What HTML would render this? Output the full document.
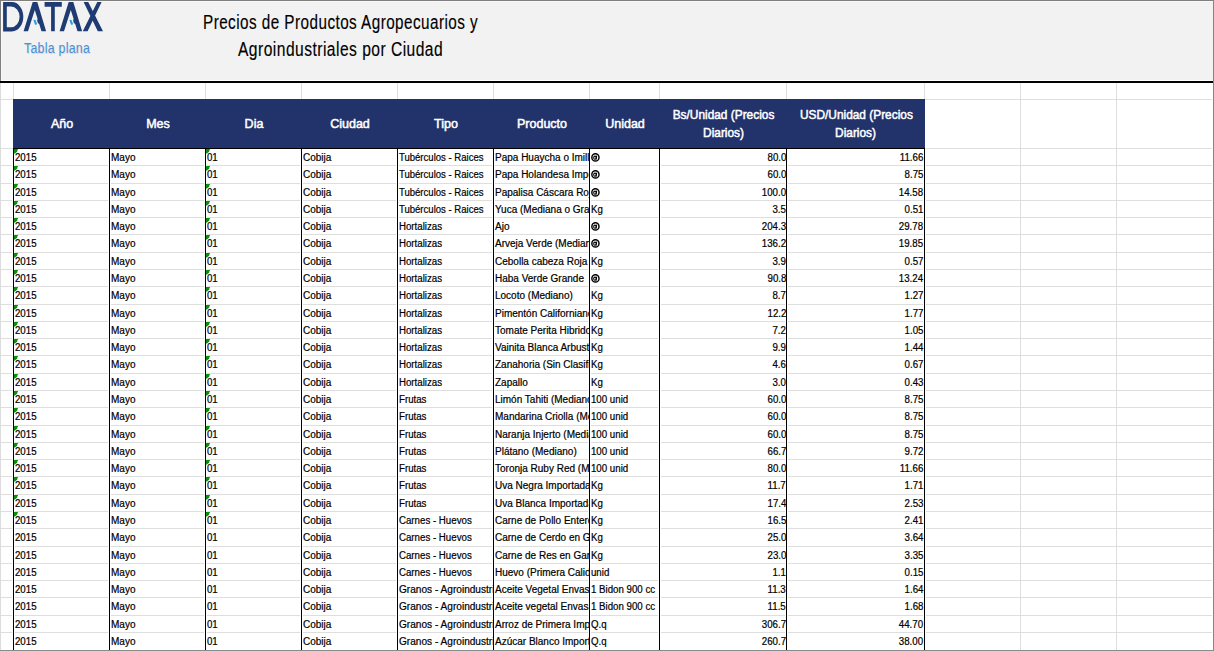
<!DOCTYPE html><html><head><meta charset="utf-8"><style>
*{margin:0;padding:0;box-sizing:border-box}
html,body{width:1214px;height:651px;overflow:hidden;background:#fff}
body{position:relative;font-family:"Liberation Sans",sans-serif;color:#000}
.a{position:absolute}
.gv{position:absolute;width:1px;background:#dedede}
.gh{position:absolute;height:1px;background:#dedede}
.bv{position:absolute;width:1px;background:#000}
.c{position:absolute;overflow:hidden;white-space:nowrap;font-size:10px;line-height:17px;height:17px;-webkit-text-stroke:0.2px #000}
.c span{display:inline-block;transform-origin:0 0;transform:scaleX(0.97)}
.r{position:absolute;white-space:nowrap;font-size:10px;line-height:17px;height:17px;text-align:right;-webkit-text-stroke:0.2px #000}
.r span{display:inline-block;transform-origin:100% 0;transform:scaleX(0.97)}
.tri{position:absolute;width:5px;height:5px}
.h{position:absolute;color:#fff;font-size:12.5px;-webkit-text-stroke:0.5px #fff;text-align:center;line-height:18px;white-space:nowrap}
.h span{display:inline-block;transform:scaleX(0.95)}

</style></head><body>
<div class="a" style="left:0;top:0;width:1214px;height:81px;background:#f2f2f2"></div>
<div class="a" style="left:0;top:80px;width:1214px;height:1px;background:#fff"></div>
<div class="a" style="left:0;top:81px;width:1214px;height:2px;background:#000"></div>
<div class="gv" style="left:13px;top:83px;height:567px"></div>
<div class="gv" style="left:109px;top:83px;height:567px"></div>
<div class="gv" style="left:205px;top:83px;height:567px"></div>
<div class="gv" style="left:301px;top:83px;height:567px"></div>
<div class="gv" style="left:397px;top:83px;height:567px"></div>
<div class="gv" style="left:493px;top:83px;height:567px"></div>
<div class="gv" style="left:589px;top:83px;height:567px"></div>
<div class="gv" style="left:659px;top:83px;height:567px"></div>
<div class="gv" style="left:786px;top:83px;height:567px"></div>
<div class="gv" style="left:924px;top:83px;height:567px"></div>
<div class="gv" style="left:1020px;top:83px;height:567px"></div>
<div class="gv" style="left:1116px;top:83px;height:567px"></div>
<div class="gh" style="left:1px;top:99px;width:1211px"></div>
<div class="gh" style="left:1px;top:148px;width:1211px"></div>
<div class="gh" style="left:1px;top:165px;width:1211px"></div>
<div class="gh" style="left:1px;top:183px;width:1211px"></div>
<div class="gh" style="left:1px;top:200px;width:1211px"></div>
<div class="gh" style="left:1px;top:217px;width:1211px"></div>
<div class="gh" style="left:1px;top:234px;width:1211px"></div>
<div class="gh" style="left:1px;top:252px;width:1211px"></div>
<div class="gh" style="left:1px;top:269px;width:1211px"></div>
<div class="gh" style="left:1px;top:286px;width:1211px"></div>
<div class="gh" style="left:1px;top:304px;width:1211px"></div>
<div class="gh" style="left:1px;top:321px;width:1211px"></div>
<div class="gh" style="left:1px;top:338px;width:1211px"></div>
<div class="gh" style="left:1px;top:355px;width:1211px"></div>
<div class="gh" style="left:1px;top:373px;width:1211px"></div>
<div class="gh" style="left:1px;top:390px;width:1211px"></div>
<div class="gh" style="left:1px;top:407px;width:1211px"></div>
<div class="gh" style="left:1px;top:425px;width:1211px"></div>
<div class="gh" style="left:1px;top:442px;width:1211px"></div>
<div class="gh" style="left:1px;top:459px;width:1211px"></div>
<div class="gh" style="left:1px;top:476px;width:1211px"></div>
<div class="gh" style="left:1px;top:494px;width:1211px"></div>
<div class="gh" style="left:1px;top:511px;width:1211px"></div>
<div class="gh" style="left:1px;top:528px;width:1211px"></div>
<div class="gh" style="left:1px;top:546px;width:1211px"></div>
<div class="gh" style="left:1px;top:563px;width:1211px"></div>
<div class="gh" style="left:1px;top:580px;width:1211px"></div>
<div class="gh" style="left:1px;top:597px;width:1211px"></div>
<div class="gh" style="left:1px;top:615px;width:1211px"></div>
<div class="gh" style="left:1px;top:632px;width:1211px"></div>
<div class="a" style="left:13px;top:99px;width:912px;height:49px;background:#22326a"></div>
<div class="a" style="left:13px;top:148px;width:912px;height:1px;background:#000"></div>
<div class="a" style="left:12px;top:149px;width:3px;height:501px;background:#fff"></div>
<div class="a" style="left:108px;top:149px;width:3px;height:501px;background:#fff"></div>
<div class="a" style="left:204px;top:149px;width:3px;height:501px;background:#fff"></div>
<div class="a" style="left:300px;top:149px;width:3px;height:501px;background:#fff"></div>
<div class="a" style="left:396px;top:149px;width:3px;height:501px;background:#fff"></div>
<div class="a" style="left:492px;top:149px;width:3px;height:501px;background:#fff"></div>
<div class="a" style="left:588px;top:149px;width:3px;height:501px;background:#fff"></div>
<div class="a" style="left:658px;top:149px;width:3px;height:501px;background:#fff"></div>
<div class="a" style="left:785px;top:149px;width:3px;height:501px;background:#fff"></div>
<div class="a" style="left:923px;top:149px;width:3px;height:501px;background:#fff"></div>
<div class="bv" style="left:13px;top:149px;height:501px"></div>
<div class="bv" style="left:109px;top:149px;height:501px"></div>
<div class="bv" style="left:205px;top:149px;height:501px"></div>
<div class="bv" style="left:301px;top:149px;height:501px"></div>
<div class="bv" style="left:397px;top:149px;height:501px"></div>
<div class="bv" style="left:493px;top:149px;height:501px"></div>
<div class="bv" style="left:589px;top:149px;height:501px"></div>
<div class="bv" style="left:659px;top:149px;height:501px"></div>
<div class="bv" style="left:786px;top:149px;height:501px"></div>
<div class="bv" style="left:924px;top:149px;height:501px"></div>
<div class="h" style="left:14px;top:115px;width:96px">Año</div>
<div class="h" style="left:110px;top:115px;width:96px">Mes</div>
<div class="h" style="left:206px;top:115px;width:96px">Dia</div>
<div class="h" style="left:302px;top:115px;width:96px">Ciudad</div>
<div class="h" style="left:398px;top:115px;width:96px">Tipo</div>
<div class="h" style="left:494px;top:115px;width:96px">Producto</div>
<div class="h" style="left:590px;top:115px;width:70px">Unidad</div>
<div class="h" style="left:660px;top:106px;width:127px"><span>Bs/Unidad (Precios</span></div>
<div class="h" style="left:660px;top:124px;width:127px"><span>Diarios)</span></div>
<div class="h" style="left:787px;top:106px;width:138px"><span>USD/Unidad (Precios</span></div>
<div class="h" style="left:787px;top:124px;width:138px"><span>Diarios)</span></div>
<div class="c" style="left:14px;top:149px;width:95px"><span style="padding-left:1px;transform:scaleX(0.97)">2015</span></div>
<div class="c" style="left:110px;top:149px;width:95px"><span style="padding-left:1px;transform:scaleX(1.0)">Mayo</span></div>
<div class="c" style="left:206px;top:149px;width:95px"><span style="padding-left:1px;transform:scaleX(0.97)">01</span></div>
<div class="c" style="left:302px;top:149px;width:95px"><span style="padding-left:1px;transform:scaleX(1.0)">Cobija</span></div>
<div class="c" style="left:398px;top:149px;width:95px"><span style="padding-left:1px;transform:scaleX(0.955)">Tubérculos - Raices</span></div>
<div class="c" style="left:494px;top:149px;width:95px"><span style="padding-left:1px;transform:scaleX(1.0)">Papa Huaycha o Imilla (Mediana)</span></div>
<div class="c" style="left:590px;top:149px;width:69px"><span style="padding-left:1px;transform:scaleX(0.97)"><svg width="10" height="9" viewBox="0 0 10 9" style="position:relative;top:1px;vertical-align:baseline"><circle cx="4.6" cy="4.4" r="3.7" fill="none" stroke="#000" stroke-width="1.5"/><ellipse cx="4.1" cy="4.7" rx="1.3" ry="1.6" fill="none" stroke="#000" stroke-width="1.1"/><path d="M5.9 2.6L5.2 6.6" stroke="#000" stroke-width="1.1"/></svg></span></div>
<div class="r" style="left:660px;top:149px;width:126px"><span>80.0</span></div>
<div class="r" style="left:787px;top:149px;width:136px"><span>11.66</span></div>
<svg class="tri" style="left:14px;top:149px" viewBox="0 0 5 5"><path d="M0 0H4.2L3.3 1.4V2.4L1.3 4.2L0 4.7Z" fill="#089008"/></svg>
<svg class="tri" style="left:206px;top:149px" viewBox="0 0 5 5"><path d="M0 0H4.2L3.3 1.4V2.4L1.3 4.2L0 4.7Z" fill="#089008"/></svg>
<div class="c" style="left:14px;top:166px;width:95px"><span style="padding-left:1px;transform:scaleX(0.97)">2015</span></div>
<div class="c" style="left:110px;top:166px;width:95px"><span style="padding-left:1px;transform:scaleX(1.0)">Mayo</span></div>
<div class="c" style="left:206px;top:166px;width:95px"><span style="padding-left:1px;transform:scaleX(0.97)">01</span></div>
<div class="c" style="left:302px;top:166px;width:95px"><span style="padding-left:1px;transform:scaleX(1.0)">Cobija</span></div>
<div class="c" style="left:398px;top:166px;width:95px"><span style="padding-left:1px;transform:scaleX(0.955)">Tubérculos - Raices</span></div>
<div class="c" style="left:494px;top:166px;width:95px"><span style="padding-left:1px;transform:scaleX(1.0)">Papa Holandesa Importada</span></div>
<div class="c" style="left:590px;top:166px;width:69px"><span style="padding-left:1px;transform:scaleX(0.97)"><svg width="10" height="9" viewBox="0 0 10 9" style="position:relative;top:1px;vertical-align:baseline"><circle cx="4.6" cy="4.4" r="3.7" fill="none" stroke="#000" stroke-width="1.5"/><ellipse cx="4.1" cy="4.7" rx="1.3" ry="1.6" fill="none" stroke="#000" stroke-width="1.1"/><path d="M5.9 2.6L5.2 6.6" stroke="#000" stroke-width="1.1"/></svg></span></div>
<div class="r" style="left:660px;top:166px;width:126px"><span>60.0</span></div>
<div class="r" style="left:787px;top:166px;width:136px"><span>8.75</span></div>
<svg class="tri" style="left:14px;top:166px" viewBox="0 0 5 5"><path d="M0 0H4.2L3.3 1.4V2.4L1.3 4.2L0 4.7Z" fill="#089008"/></svg>
<svg class="tri" style="left:206px;top:166px" viewBox="0 0 5 5"><path d="M0 0H4.2L3.3 1.4V2.4L1.3 4.2L0 4.7Z" fill="#089008"/></svg>
<div class="c" style="left:14px;top:184px;width:95px"><span style="padding-left:1px;transform:scaleX(0.97)">2015</span></div>
<div class="c" style="left:110px;top:184px;width:95px"><span style="padding-left:1px;transform:scaleX(1.0)">Mayo</span></div>
<div class="c" style="left:206px;top:184px;width:95px"><span style="padding-left:1px;transform:scaleX(0.97)">01</span></div>
<div class="c" style="left:302px;top:184px;width:95px"><span style="padding-left:1px;transform:scaleX(1.0)">Cobija</span></div>
<div class="c" style="left:398px;top:184px;width:95px"><span style="padding-left:1px;transform:scaleX(0.955)">Tubérculos - Raices</span></div>
<div class="c" style="left:494px;top:184px;width:95px"><span style="padding-left:1px;transform:scaleX(1.0)">Papalisa Cáscara Roja (Mediana)</span></div>
<div class="c" style="left:590px;top:184px;width:69px"><span style="padding-left:1px;transform:scaleX(0.97)"><svg width="10" height="9" viewBox="0 0 10 9" style="position:relative;top:1px;vertical-align:baseline"><circle cx="4.6" cy="4.4" r="3.7" fill="none" stroke="#000" stroke-width="1.5"/><ellipse cx="4.1" cy="4.7" rx="1.3" ry="1.6" fill="none" stroke="#000" stroke-width="1.1"/><path d="M5.9 2.6L5.2 6.6" stroke="#000" stroke-width="1.1"/></svg></span></div>
<div class="r" style="left:660px;top:184px;width:126px"><span>100.0</span></div>
<div class="r" style="left:787px;top:184px;width:136px"><span>14.58</span></div>
<svg class="tri" style="left:14px;top:184px" viewBox="0 0 5 5"><path d="M0 0H4.2L3.3 1.4V2.4L1.3 4.2L0 4.7Z" fill="#089008"/></svg>
<svg class="tri" style="left:206px;top:184px" viewBox="0 0 5 5"><path d="M0 0H4.2L3.3 1.4V2.4L1.3 4.2L0 4.7Z" fill="#089008"/></svg>
<div class="c" style="left:14px;top:201px;width:95px"><span style="padding-left:1px;transform:scaleX(0.97)">2015</span></div>
<div class="c" style="left:110px;top:201px;width:95px"><span style="padding-left:1px;transform:scaleX(1.0)">Mayo</span></div>
<div class="c" style="left:206px;top:201px;width:95px"><span style="padding-left:1px;transform:scaleX(0.97)">01</span></div>
<div class="c" style="left:302px;top:201px;width:95px"><span style="padding-left:1px;transform:scaleX(1.0)">Cobija</span></div>
<div class="c" style="left:398px;top:201px;width:95px"><span style="padding-left:1px;transform:scaleX(0.955)">Tubérculos - Raices</span></div>
<div class="c" style="left:494px;top:201px;width:95px"><span style="padding-left:1px;transform:scaleX(1.0)">Yuca (Mediana o Grande)</span></div>
<div class="c" style="left:590px;top:201px;width:69px"><span style="padding-left:1px;transform:scaleX(0.97)">Kg</span></div>
<div class="r" style="left:660px;top:201px;width:126px"><span>3.5</span></div>
<div class="r" style="left:787px;top:201px;width:136px"><span>0.51</span></div>
<svg class="tri" style="left:14px;top:201px" viewBox="0 0 5 5"><path d="M0 0H4.2L3.3 1.4V2.4L1.3 4.2L0 4.7Z" fill="#089008"/></svg>
<svg class="tri" style="left:206px;top:201px" viewBox="0 0 5 5"><path d="M0 0H4.2L3.3 1.4V2.4L1.3 4.2L0 4.7Z" fill="#089008"/></svg>
<div class="c" style="left:14px;top:218px;width:95px"><span style="padding-left:1px;transform:scaleX(0.97)">2015</span></div>
<div class="c" style="left:110px;top:218px;width:95px"><span style="padding-left:1px;transform:scaleX(1.0)">Mayo</span></div>
<div class="c" style="left:206px;top:218px;width:95px"><span style="padding-left:1px;transform:scaleX(0.97)">01</span></div>
<div class="c" style="left:302px;top:218px;width:95px"><span style="padding-left:1px;transform:scaleX(1.0)">Cobija</span></div>
<div class="c" style="left:398px;top:218px;width:95px"><span style="padding-left:1px;transform:scaleX(0.97)">Hortalizas</span></div>
<div class="c" style="left:494px;top:218px;width:95px"><span style="padding-left:1px;transform:scaleX(1.0)">Ajo</span></div>
<div class="c" style="left:590px;top:218px;width:69px"><span style="padding-left:1px;transform:scaleX(0.97)"><svg width="10" height="9" viewBox="0 0 10 9" style="position:relative;top:1px;vertical-align:baseline"><circle cx="4.6" cy="4.4" r="3.7" fill="none" stroke="#000" stroke-width="1.5"/><ellipse cx="4.1" cy="4.7" rx="1.3" ry="1.6" fill="none" stroke="#000" stroke-width="1.1"/><path d="M5.9 2.6L5.2 6.6" stroke="#000" stroke-width="1.1"/></svg></span></div>
<div class="r" style="left:660px;top:218px;width:126px"><span>204.3</span></div>
<div class="r" style="left:787px;top:218px;width:136px"><span>29.78</span></div>
<svg class="tri" style="left:14px;top:218px" viewBox="0 0 5 5"><path d="M0 0H4.2L3.3 1.4V2.4L1.3 4.2L0 4.7Z" fill="#089008"/></svg>
<svg class="tri" style="left:206px;top:218px" viewBox="0 0 5 5"><path d="M0 0H4.2L3.3 1.4V2.4L1.3 4.2L0 4.7Z" fill="#089008"/></svg>
<div class="c" style="left:14px;top:235px;width:95px"><span style="padding-left:1px;transform:scaleX(0.97)">2015</span></div>
<div class="c" style="left:110px;top:235px;width:95px"><span style="padding-left:1px;transform:scaleX(1.0)">Mayo</span></div>
<div class="c" style="left:206px;top:235px;width:95px"><span style="padding-left:1px;transform:scaleX(0.97)">01</span></div>
<div class="c" style="left:302px;top:235px;width:95px"><span style="padding-left:1px;transform:scaleX(1.0)">Cobija</span></div>
<div class="c" style="left:398px;top:235px;width:95px"><span style="padding-left:1px;transform:scaleX(0.97)">Hortalizas</span></div>
<div class="c" style="left:494px;top:235px;width:95px"><span style="padding-left:1px;transform:scaleX(1.0)">Arveja Verde (Mediana)</span></div>
<div class="c" style="left:590px;top:235px;width:69px"><span style="padding-left:1px;transform:scaleX(0.97)"><svg width="10" height="9" viewBox="0 0 10 9" style="position:relative;top:1px;vertical-align:baseline"><circle cx="4.6" cy="4.4" r="3.7" fill="none" stroke="#000" stroke-width="1.5"/><ellipse cx="4.1" cy="4.7" rx="1.3" ry="1.6" fill="none" stroke="#000" stroke-width="1.1"/><path d="M5.9 2.6L5.2 6.6" stroke="#000" stroke-width="1.1"/></svg></span></div>
<div class="r" style="left:660px;top:235px;width:126px"><span>136.2</span></div>
<div class="r" style="left:787px;top:235px;width:136px"><span>19.85</span></div>
<svg class="tri" style="left:14px;top:235px" viewBox="0 0 5 5"><path d="M0 0H4.2L3.3 1.4V2.4L1.3 4.2L0 4.7Z" fill="#089008"/></svg>
<svg class="tri" style="left:206px;top:235px" viewBox="0 0 5 5"><path d="M0 0H4.2L3.3 1.4V2.4L1.3 4.2L0 4.7Z" fill="#089008"/></svg>
<div class="c" style="left:14px;top:253px;width:95px"><span style="padding-left:1px;transform:scaleX(0.97)">2015</span></div>
<div class="c" style="left:110px;top:253px;width:95px"><span style="padding-left:1px;transform:scaleX(1.0)">Mayo</span></div>
<div class="c" style="left:206px;top:253px;width:95px"><span style="padding-left:1px;transform:scaleX(0.97)">01</span></div>
<div class="c" style="left:302px;top:253px;width:95px"><span style="padding-left:1px;transform:scaleX(1.0)">Cobija</span></div>
<div class="c" style="left:398px;top:253px;width:95px"><span style="padding-left:1px;transform:scaleX(0.97)">Hortalizas</span></div>
<div class="c" style="left:494px;top:253px;width:95px"><span style="padding-left:1px;transform:scaleX(1.0)">Cebolla cabeza Roja Importada</span></div>
<div class="c" style="left:590px;top:253px;width:69px"><span style="padding-left:1px;transform:scaleX(0.97)">Kg</span></div>
<div class="r" style="left:660px;top:253px;width:126px"><span>3.9</span></div>
<div class="r" style="left:787px;top:253px;width:136px"><span>0.57</span></div>
<svg class="tri" style="left:14px;top:253px" viewBox="0 0 5 5"><path d="M0 0H4.2L3.3 1.4V2.4L1.3 4.2L0 4.7Z" fill="#089008"/></svg>
<svg class="tri" style="left:206px;top:253px" viewBox="0 0 5 5"><path d="M0 0H4.2L3.3 1.4V2.4L1.3 4.2L0 4.7Z" fill="#089008"/></svg>
<div class="c" style="left:14px;top:270px;width:95px"><span style="padding-left:1px;transform:scaleX(0.97)">2015</span></div>
<div class="c" style="left:110px;top:270px;width:95px"><span style="padding-left:1px;transform:scaleX(1.0)">Mayo</span></div>
<div class="c" style="left:206px;top:270px;width:95px"><span style="padding-left:1px;transform:scaleX(0.97)">01</span></div>
<div class="c" style="left:302px;top:270px;width:95px"><span style="padding-left:1px;transform:scaleX(1.0)">Cobija</span></div>
<div class="c" style="left:398px;top:270px;width:95px"><span style="padding-left:1px;transform:scaleX(0.97)">Hortalizas</span></div>
<div class="c" style="left:494px;top:270px;width:95px"><span style="padding-left:1px;transform:scaleX(1.0)">Haba Verde Grande</span></div>
<div class="c" style="left:590px;top:270px;width:69px"><span style="padding-left:1px;transform:scaleX(0.97)"><svg width="10" height="9" viewBox="0 0 10 9" style="position:relative;top:1px;vertical-align:baseline"><circle cx="4.6" cy="4.4" r="3.7" fill="none" stroke="#000" stroke-width="1.5"/><ellipse cx="4.1" cy="4.7" rx="1.3" ry="1.6" fill="none" stroke="#000" stroke-width="1.1"/><path d="M5.9 2.6L5.2 6.6" stroke="#000" stroke-width="1.1"/></svg></span></div>
<div class="r" style="left:660px;top:270px;width:126px"><span>90.8</span></div>
<div class="r" style="left:787px;top:270px;width:136px"><span>13.24</span></div>
<svg class="tri" style="left:14px;top:270px" viewBox="0 0 5 5"><path d="M0 0H4.2L3.3 1.4V2.4L1.3 4.2L0 4.7Z" fill="#089008"/></svg>
<svg class="tri" style="left:206px;top:270px" viewBox="0 0 5 5"><path d="M0 0H4.2L3.3 1.4V2.4L1.3 4.2L0 4.7Z" fill="#089008"/></svg>
<div class="c" style="left:14px;top:287px;width:95px"><span style="padding-left:1px;transform:scaleX(0.97)">2015</span></div>
<div class="c" style="left:110px;top:287px;width:95px"><span style="padding-left:1px;transform:scaleX(1.0)">Mayo</span></div>
<div class="c" style="left:206px;top:287px;width:95px"><span style="padding-left:1px;transform:scaleX(0.97)">01</span></div>
<div class="c" style="left:302px;top:287px;width:95px"><span style="padding-left:1px;transform:scaleX(1.0)">Cobija</span></div>
<div class="c" style="left:398px;top:287px;width:95px"><span style="padding-left:1px;transform:scaleX(0.97)">Hortalizas</span></div>
<div class="c" style="left:494px;top:287px;width:95px"><span style="padding-left:1px;transform:scaleX(1.0)">Locoto (Mediano)</span></div>
<div class="c" style="left:590px;top:287px;width:69px"><span style="padding-left:1px;transform:scaleX(0.97)">Kg</span></div>
<div class="r" style="left:660px;top:287px;width:126px"><span>8.7</span></div>
<div class="r" style="left:787px;top:287px;width:136px"><span>1.27</span></div>
<svg class="tri" style="left:14px;top:287px" viewBox="0 0 5 5"><path d="M0 0H4.2L3.3 1.4V2.4L1.3 4.2L0 4.7Z" fill="#089008"/></svg>
<svg class="tri" style="left:206px;top:287px" viewBox="0 0 5 5"><path d="M0 0H4.2L3.3 1.4V2.4L1.3 4.2L0 4.7Z" fill="#089008"/></svg>
<div class="c" style="left:14px;top:305px;width:95px"><span style="padding-left:1px;transform:scaleX(0.97)">2015</span></div>
<div class="c" style="left:110px;top:305px;width:95px"><span style="padding-left:1px;transform:scaleX(1.0)">Mayo</span></div>
<div class="c" style="left:206px;top:305px;width:95px"><span style="padding-left:1px;transform:scaleX(0.97)">01</span></div>
<div class="c" style="left:302px;top:305px;width:95px"><span style="padding-left:1px;transform:scaleX(1.0)">Cobija</span></div>
<div class="c" style="left:398px;top:305px;width:95px"><span style="padding-left:1px;transform:scaleX(0.97)">Hortalizas</span></div>
<div class="c" style="left:494px;top:305px;width:95px"><span style="padding-left:1px;transform:scaleX(1.0)">Pimentón Californiano</span></div>
<div class="c" style="left:590px;top:305px;width:69px"><span style="padding-left:1px;transform:scaleX(0.97)">Kg</span></div>
<div class="r" style="left:660px;top:305px;width:126px"><span>12.2</span></div>
<div class="r" style="left:787px;top:305px;width:136px"><span>1.77</span></div>
<svg class="tri" style="left:14px;top:305px" viewBox="0 0 5 5"><path d="M0 0H4.2L3.3 1.4V2.4L1.3 4.2L0 4.7Z" fill="#089008"/></svg>
<svg class="tri" style="left:206px;top:305px" viewBox="0 0 5 5"><path d="M0 0H4.2L3.3 1.4V2.4L1.3 4.2L0 4.7Z" fill="#089008"/></svg>
<div class="c" style="left:14px;top:322px;width:95px"><span style="padding-left:1px;transform:scaleX(0.97)">2015</span></div>
<div class="c" style="left:110px;top:322px;width:95px"><span style="padding-left:1px;transform:scaleX(1.0)">Mayo</span></div>
<div class="c" style="left:206px;top:322px;width:95px"><span style="padding-left:1px;transform:scaleX(0.97)">01</span></div>
<div class="c" style="left:302px;top:322px;width:95px"><span style="padding-left:1px;transform:scaleX(1.0)">Cobija</span></div>
<div class="c" style="left:398px;top:322px;width:95px"><span style="padding-left:1px;transform:scaleX(0.97)">Hortalizas</span></div>
<div class="c" style="left:494px;top:322px;width:95px"><span style="padding-left:1px;transform:scaleX(1.0)">Tomate Perita Hibrido</span></div>
<div class="c" style="left:590px;top:322px;width:69px"><span style="padding-left:1px;transform:scaleX(0.97)">Kg</span></div>
<div class="r" style="left:660px;top:322px;width:126px"><span>7.2</span></div>
<div class="r" style="left:787px;top:322px;width:136px"><span>1.05</span></div>
<svg class="tri" style="left:14px;top:322px" viewBox="0 0 5 5"><path d="M0 0H4.2L3.3 1.4V2.4L1.3 4.2L0 4.7Z" fill="#089008"/></svg>
<svg class="tri" style="left:206px;top:322px" viewBox="0 0 5 5"><path d="M0 0H4.2L3.3 1.4V2.4L1.3 4.2L0 4.7Z" fill="#089008"/></svg>
<div class="c" style="left:14px;top:339px;width:95px"><span style="padding-left:1px;transform:scaleX(0.97)">2015</span></div>
<div class="c" style="left:110px;top:339px;width:95px"><span style="padding-left:1px;transform:scaleX(1.0)">Mayo</span></div>
<div class="c" style="left:206px;top:339px;width:95px"><span style="padding-left:1px;transform:scaleX(0.97)">01</span></div>
<div class="c" style="left:302px;top:339px;width:95px"><span style="padding-left:1px;transform:scaleX(1.0)">Cobija</span></div>
<div class="c" style="left:398px;top:339px;width:95px"><span style="padding-left:1px;transform:scaleX(0.97)">Hortalizas</span></div>
<div class="c" style="left:494px;top:339px;width:95px"><span style="padding-left:1px;transform:scaleX(1.0)">Vainita Blanca Arbustiva</span></div>
<div class="c" style="left:590px;top:339px;width:69px"><span style="padding-left:1px;transform:scaleX(0.97)">Kg</span></div>
<div class="r" style="left:660px;top:339px;width:126px"><span>9.9</span></div>
<div class="r" style="left:787px;top:339px;width:136px"><span>1.44</span></div>
<svg class="tri" style="left:14px;top:339px" viewBox="0 0 5 5"><path d="M0 0H4.2L3.3 1.4V2.4L1.3 4.2L0 4.7Z" fill="#089008"/></svg>
<svg class="tri" style="left:206px;top:339px" viewBox="0 0 5 5"><path d="M0 0H4.2L3.3 1.4V2.4L1.3 4.2L0 4.7Z" fill="#089008"/></svg>
<div class="c" style="left:14px;top:356px;width:95px"><span style="padding-left:1px;transform:scaleX(0.97)">2015</span></div>
<div class="c" style="left:110px;top:356px;width:95px"><span style="padding-left:1px;transform:scaleX(1.0)">Mayo</span></div>
<div class="c" style="left:206px;top:356px;width:95px"><span style="padding-left:1px;transform:scaleX(0.97)">01</span></div>
<div class="c" style="left:302px;top:356px;width:95px"><span style="padding-left:1px;transform:scaleX(1.0)">Cobija</span></div>
<div class="c" style="left:398px;top:356px;width:95px"><span style="padding-left:1px;transform:scaleX(0.97)">Hortalizas</span></div>
<div class="c" style="left:494px;top:356px;width:95px"><span style="padding-left:1px;transform:scaleX(1.0)">Zanahoria (Sin Clasificar)</span></div>
<div class="c" style="left:590px;top:356px;width:69px"><span style="padding-left:1px;transform:scaleX(0.97)">Kg</span></div>
<div class="r" style="left:660px;top:356px;width:126px"><span>4.6</span></div>
<div class="r" style="left:787px;top:356px;width:136px"><span>0.67</span></div>
<svg class="tri" style="left:14px;top:356px" viewBox="0 0 5 5"><path d="M0 0H4.2L3.3 1.4V2.4L1.3 4.2L0 4.7Z" fill="#089008"/></svg>
<svg class="tri" style="left:206px;top:356px" viewBox="0 0 5 5"><path d="M0 0H4.2L3.3 1.4V2.4L1.3 4.2L0 4.7Z" fill="#089008"/></svg>
<div class="c" style="left:14px;top:374px;width:95px"><span style="padding-left:1px;transform:scaleX(0.97)">2015</span></div>
<div class="c" style="left:110px;top:374px;width:95px"><span style="padding-left:1px;transform:scaleX(1.0)">Mayo</span></div>
<div class="c" style="left:206px;top:374px;width:95px"><span style="padding-left:1px;transform:scaleX(0.97)">01</span></div>
<div class="c" style="left:302px;top:374px;width:95px"><span style="padding-left:1px;transform:scaleX(1.0)">Cobija</span></div>
<div class="c" style="left:398px;top:374px;width:95px"><span style="padding-left:1px;transform:scaleX(0.97)">Hortalizas</span></div>
<div class="c" style="left:494px;top:374px;width:95px"><span style="padding-left:1px;transform:scaleX(1.0)">Zapallo</span></div>
<div class="c" style="left:590px;top:374px;width:69px"><span style="padding-left:1px;transform:scaleX(0.97)">Kg</span></div>
<div class="r" style="left:660px;top:374px;width:126px"><span>3.0</span></div>
<div class="r" style="left:787px;top:374px;width:136px"><span>0.43</span></div>
<svg class="tri" style="left:14px;top:374px" viewBox="0 0 5 5"><path d="M0 0H4.2L3.3 1.4V2.4L1.3 4.2L0 4.7Z" fill="#089008"/></svg>
<svg class="tri" style="left:206px;top:374px" viewBox="0 0 5 5"><path d="M0 0H4.2L3.3 1.4V2.4L1.3 4.2L0 4.7Z" fill="#089008"/></svg>
<div class="c" style="left:14px;top:391px;width:95px"><span style="padding-left:1px;transform:scaleX(0.97)">2015</span></div>
<div class="c" style="left:110px;top:391px;width:95px"><span style="padding-left:1px;transform:scaleX(1.0)">Mayo</span></div>
<div class="c" style="left:206px;top:391px;width:95px"><span style="padding-left:1px;transform:scaleX(0.97)">01</span></div>
<div class="c" style="left:302px;top:391px;width:95px"><span style="padding-left:1px;transform:scaleX(1.0)">Cobija</span></div>
<div class="c" style="left:398px;top:391px;width:95px"><span style="padding-left:1px;transform:scaleX(0.97)">Frutas</span></div>
<div class="c" style="left:494px;top:391px;width:95px"><span style="padding-left:1px;transform:scaleX(1.0)">Limón Tahiti (Mediano)</span></div>
<div class="c" style="left:590px;top:391px;width:69px"><span style="padding-left:1px;transform:scaleX(0.97)">100 unid</span></div>
<div class="r" style="left:660px;top:391px;width:126px"><span>60.0</span></div>
<div class="r" style="left:787px;top:391px;width:136px"><span>8.75</span></div>
<svg class="tri" style="left:14px;top:391px" viewBox="0 0 5 5"><path d="M0 0H4.2L3.3 1.4V2.4L1.3 4.2L0 4.7Z" fill="#089008"/></svg>
<svg class="tri" style="left:206px;top:391px" viewBox="0 0 5 5"><path d="M0 0H4.2L3.3 1.4V2.4L1.3 4.2L0 4.7Z" fill="#089008"/></svg>
<div class="c" style="left:14px;top:408px;width:95px"><span style="padding-left:1px;transform:scaleX(0.97)">2015</span></div>
<div class="c" style="left:110px;top:408px;width:95px"><span style="padding-left:1px;transform:scaleX(1.0)">Mayo</span></div>
<div class="c" style="left:206px;top:408px;width:95px"><span style="padding-left:1px;transform:scaleX(0.97)">01</span></div>
<div class="c" style="left:302px;top:408px;width:95px"><span style="padding-left:1px;transform:scaleX(1.0)">Cobija</span></div>
<div class="c" style="left:398px;top:408px;width:95px"><span style="padding-left:1px;transform:scaleX(0.97)">Frutas</span></div>
<div class="c" style="left:494px;top:408px;width:95px"><span style="padding-left:1px;transform:scaleX(1.0)">Mandarina Criolla (Mediana)</span></div>
<div class="c" style="left:590px;top:408px;width:69px"><span style="padding-left:1px;transform:scaleX(0.97)">100 unid</span></div>
<div class="r" style="left:660px;top:408px;width:126px"><span>60.0</span></div>
<div class="r" style="left:787px;top:408px;width:136px"><span>8.75</span></div>
<svg class="tri" style="left:14px;top:408px" viewBox="0 0 5 5"><path d="M0 0H4.2L3.3 1.4V2.4L1.3 4.2L0 4.7Z" fill="#089008"/></svg>
<svg class="tri" style="left:206px;top:408px" viewBox="0 0 5 5"><path d="M0 0H4.2L3.3 1.4V2.4L1.3 4.2L0 4.7Z" fill="#089008"/></svg>
<div class="c" style="left:14px;top:426px;width:95px"><span style="padding-left:1px;transform:scaleX(0.97)">2015</span></div>
<div class="c" style="left:110px;top:426px;width:95px"><span style="padding-left:1px;transform:scaleX(1.0)">Mayo</span></div>
<div class="c" style="left:206px;top:426px;width:95px"><span style="padding-left:1px;transform:scaleX(0.97)">01</span></div>
<div class="c" style="left:302px;top:426px;width:95px"><span style="padding-left:1px;transform:scaleX(1.0)">Cobija</span></div>
<div class="c" style="left:398px;top:426px;width:95px"><span style="padding-left:1px;transform:scaleX(0.97)">Frutas</span></div>
<div class="c" style="left:494px;top:426px;width:95px"><span style="padding-left:1px;transform:scaleX(1.0)">Naranja Injerto (Mediana)</span></div>
<div class="c" style="left:590px;top:426px;width:69px"><span style="padding-left:1px;transform:scaleX(0.97)">100 unid</span></div>
<div class="r" style="left:660px;top:426px;width:126px"><span>60.0</span></div>
<div class="r" style="left:787px;top:426px;width:136px"><span>8.75</span></div>
<svg class="tri" style="left:14px;top:426px" viewBox="0 0 5 5"><path d="M0 0H4.2L3.3 1.4V2.4L1.3 4.2L0 4.7Z" fill="#089008"/></svg>
<svg class="tri" style="left:206px;top:426px" viewBox="0 0 5 5"><path d="M0 0H4.2L3.3 1.4V2.4L1.3 4.2L0 4.7Z" fill="#089008"/></svg>
<div class="c" style="left:14px;top:443px;width:95px"><span style="padding-left:1px;transform:scaleX(0.97)">2015</span></div>
<div class="c" style="left:110px;top:443px;width:95px"><span style="padding-left:1px;transform:scaleX(1.0)">Mayo</span></div>
<div class="c" style="left:206px;top:443px;width:95px"><span style="padding-left:1px;transform:scaleX(0.97)">01</span></div>
<div class="c" style="left:302px;top:443px;width:95px"><span style="padding-left:1px;transform:scaleX(1.0)">Cobija</span></div>
<div class="c" style="left:398px;top:443px;width:95px"><span style="padding-left:1px;transform:scaleX(0.97)">Frutas</span></div>
<div class="c" style="left:494px;top:443px;width:95px"><span style="padding-left:1px;transform:scaleX(1.0)">Plátano (Mediano)</span></div>
<div class="c" style="left:590px;top:443px;width:69px"><span style="padding-left:1px;transform:scaleX(0.97)">100 unid</span></div>
<div class="r" style="left:660px;top:443px;width:126px"><span>66.7</span></div>
<div class="r" style="left:787px;top:443px;width:136px"><span>9.72</span></div>
<svg class="tri" style="left:14px;top:443px" viewBox="0 0 5 5"><path d="M0 0H4.2L3.3 1.4V2.4L1.3 4.2L0 4.7Z" fill="#089008"/></svg>
<svg class="tri" style="left:206px;top:443px" viewBox="0 0 5 5"><path d="M0 0H4.2L3.3 1.4V2.4L1.3 4.2L0 4.7Z" fill="#089008"/></svg>
<div class="c" style="left:14px;top:460px;width:95px"><span style="padding-left:1px;transform:scaleX(0.97)">2015</span></div>
<div class="c" style="left:110px;top:460px;width:95px"><span style="padding-left:1px;transform:scaleX(1.0)">Mayo</span></div>
<div class="c" style="left:206px;top:460px;width:95px"><span style="padding-left:1px;transform:scaleX(0.97)">01</span></div>
<div class="c" style="left:302px;top:460px;width:95px"><span style="padding-left:1px;transform:scaleX(1.0)">Cobija</span></div>
<div class="c" style="left:398px;top:460px;width:95px"><span style="padding-left:1px;transform:scaleX(0.97)">Frutas</span></div>
<div class="c" style="left:494px;top:460px;width:95px"><span style="padding-left:1px;transform:scaleX(1.0)">Toronja Ruby Red (Mediana)</span></div>
<div class="c" style="left:590px;top:460px;width:69px"><span style="padding-left:1px;transform:scaleX(0.97)">100 unid</span></div>
<div class="r" style="left:660px;top:460px;width:126px"><span>80.0</span></div>
<div class="r" style="left:787px;top:460px;width:136px"><span>11.66</span></div>
<svg class="tri" style="left:14px;top:460px" viewBox="0 0 5 5"><path d="M0 0H4.2L3.3 1.4V2.4L1.3 4.2L0 4.7Z" fill="#089008"/></svg>
<svg class="tri" style="left:206px;top:460px" viewBox="0 0 5 5"><path d="M0 0H4.2L3.3 1.4V2.4L1.3 4.2L0 4.7Z" fill="#089008"/></svg>
<div class="c" style="left:14px;top:477px;width:95px"><span style="padding-left:1px;transform:scaleX(0.97)">2015</span></div>
<div class="c" style="left:110px;top:477px;width:95px"><span style="padding-left:1px;transform:scaleX(1.0)">Mayo</span></div>
<div class="c" style="left:206px;top:477px;width:95px"><span style="padding-left:1px;transform:scaleX(0.97)">01</span></div>
<div class="c" style="left:302px;top:477px;width:95px"><span style="padding-left:1px;transform:scaleX(1.0)">Cobija</span></div>
<div class="c" style="left:398px;top:477px;width:95px"><span style="padding-left:1px;transform:scaleX(0.97)">Frutas</span></div>
<div class="c" style="left:494px;top:477px;width:95px"><span style="padding-left:1px;transform:scaleX(1.0)">Uva Negra Importada</span></div>
<div class="c" style="left:590px;top:477px;width:69px"><span style="padding-left:1px;transform:scaleX(0.97)">Kg</span></div>
<div class="r" style="left:660px;top:477px;width:126px"><span>11.7</span></div>
<div class="r" style="left:787px;top:477px;width:136px"><span>1.71</span></div>
<svg class="tri" style="left:14px;top:477px" viewBox="0 0 5 5"><path d="M0 0H4.2L3.3 1.4V2.4L1.3 4.2L0 4.7Z" fill="#089008"/></svg>
<svg class="tri" style="left:206px;top:477px" viewBox="0 0 5 5"><path d="M0 0H4.2L3.3 1.4V2.4L1.3 4.2L0 4.7Z" fill="#089008"/></svg>
<div class="c" style="left:14px;top:495px;width:95px"><span style="padding-left:1px;transform:scaleX(0.97)">2015</span></div>
<div class="c" style="left:110px;top:495px;width:95px"><span style="padding-left:1px;transform:scaleX(1.0)">Mayo</span></div>
<div class="c" style="left:206px;top:495px;width:95px"><span style="padding-left:1px;transform:scaleX(0.97)">01</span></div>
<div class="c" style="left:302px;top:495px;width:95px"><span style="padding-left:1px;transform:scaleX(1.0)">Cobija</span></div>
<div class="c" style="left:398px;top:495px;width:95px"><span style="padding-left:1px;transform:scaleX(0.97)">Frutas</span></div>
<div class="c" style="left:494px;top:495px;width:95px"><span style="padding-left:1px;transform:scaleX(1.0)">Uva Blanca Importada</span></div>
<div class="c" style="left:590px;top:495px;width:69px"><span style="padding-left:1px;transform:scaleX(0.97)">Kg</span></div>
<div class="r" style="left:660px;top:495px;width:126px"><span>17.4</span></div>
<div class="r" style="left:787px;top:495px;width:136px"><span>2.53</span></div>
<svg class="tri" style="left:14px;top:495px" viewBox="0 0 5 5"><path d="M0 0H4.2L3.3 1.4V2.4L1.3 4.2L0 4.7Z" fill="#089008"/></svg>
<svg class="tri" style="left:206px;top:495px" viewBox="0 0 5 5"><path d="M0 0H4.2L3.3 1.4V2.4L1.3 4.2L0 4.7Z" fill="#089008"/></svg>
<div class="c" style="left:14px;top:512px;width:95px"><span style="padding-left:1px;transform:scaleX(0.97)">2015</span></div>
<div class="c" style="left:110px;top:512px;width:95px"><span style="padding-left:1px;transform:scaleX(1.0)">Mayo</span></div>
<div class="c" style="left:206px;top:512px;width:95px"><span style="padding-left:1px;transform:scaleX(0.97)">01</span></div>
<div class="c" style="left:302px;top:512px;width:95px"><span style="padding-left:1px;transform:scaleX(1.0)">Cobija</span></div>
<div class="c" style="left:398px;top:512px;width:95px"><span style="padding-left:1px;transform:scaleX(0.97)">Carnes - Huevos</span></div>
<div class="c" style="left:494px;top:512px;width:95px"><span style="padding-left:1px;transform:scaleX(1.0)">Carne de Pollo Entero</span></div>
<div class="c" style="left:590px;top:512px;width:69px"><span style="padding-left:1px;transform:scaleX(0.97)">Kg</span></div>
<div class="r" style="left:660px;top:512px;width:126px"><span>16.5</span></div>
<div class="r" style="left:787px;top:512px;width:136px"><span>2.41</span></div>
<svg class="tri" style="left:14px;top:512px" viewBox="0 0 5 5"><path d="M0 0H4.2L3.3 1.4V2.4L1.3 4.2L0 4.7Z" fill="#089008"/></svg>
<svg class="tri" style="left:206px;top:512px" viewBox="0 0 5 5"><path d="M0 0H4.2L3.3 1.4V2.4L1.3 4.2L0 4.7Z" fill="#089008"/></svg>
<div class="c" style="left:14px;top:529px;width:95px"><span style="padding-left:1px;transform:scaleX(0.97)">2015</span></div>
<div class="c" style="left:110px;top:529px;width:95px"><span style="padding-left:1px;transform:scaleX(1.0)">Mayo</span></div>
<div class="c" style="left:206px;top:529px;width:95px"><span style="padding-left:1px;transform:scaleX(0.97)">01</span></div>
<div class="c" style="left:302px;top:529px;width:95px"><span style="padding-left:1px;transform:scaleX(1.0)">Cobija</span></div>
<div class="c" style="left:398px;top:529px;width:95px"><span style="padding-left:1px;transform:scaleX(0.97)">Carnes - Huevos</span></div>
<div class="c" style="left:494px;top:529px;width:95px"><span style="padding-left:1px;transform:scaleX(1.0)">Carne de Cerdo en Gancho</span></div>
<div class="c" style="left:590px;top:529px;width:69px"><span style="padding-left:1px;transform:scaleX(0.97)">Kg</span></div>
<div class="r" style="left:660px;top:529px;width:126px"><span>25.0</span></div>
<div class="r" style="left:787px;top:529px;width:136px"><span>3.64</span></div>
<div class="c" style="left:14px;top:547px;width:95px"><span style="padding-left:1px;transform:scaleX(0.97)">2015</span></div>
<div class="c" style="left:110px;top:547px;width:95px"><span style="padding-left:1px;transform:scaleX(1.0)">Mayo</span></div>
<div class="c" style="left:206px;top:547px;width:95px"><span style="padding-left:1px;transform:scaleX(0.97)">01</span></div>
<div class="c" style="left:302px;top:547px;width:95px"><span style="padding-left:1px;transform:scaleX(1.0)">Cobija</span></div>
<div class="c" style="left:398px;top:547px;width:95px"><span style="padding-left:1px;transform:scaleX(0.97)">Carnes - Huevos</span></div>
<div class="c" style="left:494px;top:547px;width:95px"><span style="padding-left:1px;transform:scaleX(1.0)">Carne de Res en Gancho</span></div>
<div class="c" style="left:590px;top:547px;width:69px"><span style="padding-left:1px;transform:scaleX(0.97)">Kg</span></div>
<div class="r" style="left:660px;top:547px;width:126px"><span>23.0</span></div>
<div class="r" style="left:787px;top:547px;width:136px"><span>3.35</span></div>
<div class="c" style="left:14px;top:564px;width:95px"><span style="padding-left:1px;transform:scaleX(0.97)">2015</span></div>
<div class="c" style="left:110px;top:564px;width:95px"><span style="padding-left:1px;transform:scaleX(1.0)">Mayo</span></div>
<div class="c" style="left:206px;top:564px;width:95px"><span style="padding-left:1px;transform:scaleX(0.97)">01</span></div>
<div class="c" style="left:302px;top:564px;width:95px"><span style="padding-left:1px;transform:scaleX(1.0)">Cobija</span></div>
<div class="c" style="left:398px;top:564px;width:95px"><span style="padding-left:1px;transform:scaleX(0.97)">Carnes - Huevos</span></div>
<div class="c" style="left:494px;top:564px;width:95px"><span style="padding-left:1px;transform:scaleX(1.0)">Huevo (Primera Calidad)</span></div>
<div class="c" style="left:590px;top:564px;width:69px"><span style="padding-left:1px;transform:scaleX(0.97)">unid</span></div>
<div class="r" style="left:660px;top:564px;width:126px"><span>1.1</span></div>
<div class="r" style="left:787px;top:564px;width:136px"><span>0.15</span></div>
<div class="c" style="left:14px;top:581px;width:95px"><span style="padding-left:1px;transform:scaleX(0.97)">2015</span></div>
<div class="c" style="left:110px;top:581px;width:95px"><span style="padding-left:1px;transform:scaleX(1.0)">Mayo</span></div>
<div class="c" style="left:206px;top:581px;width:95px"><span style="padding-left:1px;transform:scaleX(0.97)">01</span></div>
<div class="c" style="left:302px;top:581px;width:95px"><span style="padding-left:1px;transform:scaleX(1.0)">Cobija</span></div>
<div class="c" style="left:398px;top:581px;width:95px"><span style="padding-left:1px;transform:scaleX(1.01)">Granos - Agroindustriales</span></div>
<div class="c" style="left:494px;top:581px;width:95px"><span style="padding-left:1px;transform:scaleX(1.0)">Aceite Vegetal Envasado</span></div>
<div class="c" style="left:590px;top:581px;width:69px"><span style="padding-left:1px;transform:scaleX(0.97)">1 Bidon 900 cc</span></div>
<div class="r" style="left:660px;top:581px;width:126px"><span>11.3</span></div>
<div class="r" style="left:787px;top:581px;width:136px"><span>1.64</span></div>
<div class="c" style="left:14px;top:598px;width:95px"><span style="padding-left:1px;transform:scaleX(0.97)">2015</span></div>
<div class="c" style="left:110px;top:598px;width:95px"><span style="padding-left:1px;transform:scaleX(1.0)">Mayo</span></div>
<div class="c" style="left:206px;top:598px;width:95px"><span style="padding-left:1px;transform:scaleX(0.97)">01</span></div>
<div class="c" style="left:302px;top:598px;width:95px"><span style="padding-left:1px;transform:scaleX(1.0)">Cobija</span></div>
<div class="c" style="left:398px;top:598px;width:95px"><span style="padding-left:1px;transform:scaleX(1.01)">Granos - Agroindustriales</span></div>
<div class="c" style="left:494px;top:598px;width:95px"><span style="padding-left:1px;transform:scaleX(1.0)">Aceite vegetal Envasado</span></div>
<div class="c" style="left:590px;top:598px;width:69px"><span style="padding-left:1px;transform:scaleX(0.97)">1 Bidon 900 cc</span></div>
<div class="r" style="left:660px;top:598px;width:126px"><span>11.5</span></div>
<div class="r" style="left:787px;top:598px;width:136px"><span>1.68</span></div>
<div class="c" style="left:14px;top:616px;width:95px"><span style="padding-left:1px;transform:scaleX(0.97)">2015</span></div>
<div class="c" style="left:110px;top:616px;width:95px"><span style="padding-left:1px;transform:scaleX(1.0)">Mayo</span></div>
<div class="c" style="left:206px;top:616px;width:95px"><span style="padding-left:1px;transform:scaleX(0.97)">01</span></div>
<div class="c" style="left:302px;top:616px;width:95px"><span style="padding-left:1px;transform:scaleX(1.0)">Cobija</span></div>
<div class="c" style="left:398px;top:616px;width:95px"><span style="padding-left:1px;transform:scaleX(1.01)">Granos - Agroindustriales</span></div>
<div class="c" style="left:494px;top:616px;width:95px"><span style="padding-left:1px;transform:scaleX(1.0)">Arroz de Primera Importado</span></div>
<div class="c" style="left:590px;top:616px;width:69px"><span style="padding-left:1px;transform:scaleX(0.97)">Q.q</span></div>
<div class="r" style="left:660px;top:616px;width:126px"><span>306.7</span></div>
<div class="r" style="left:787px;top:616px;width:136px"><span>44.70</span></div>
<div class="c" style="left:14px;top:633px;width:95px"><span style="padding-left:1px;transform:scaleX(0.97)">2015</span></div>
<div class="c" style="left:110px;top:633px;width:95px"><span style="padding-left:1px;transform:scaleX(1.0)">Mayo</span></div>
<div class="c" style="left:206px;top:633px;width:95px"><span style="padding-left:1px;transform:scaleX(0.97)">01</span></div>
<div class="c" style="left:302px;top:633px;width:95px"><span style="padding-left:1px;transform:scaleX(1.0)">Cobija</span></div>
<div class="c" style="left:398px;top:633px;width:95px"><span style="padding-left:1px;transform:scaleX(1.01)">Granos - Agroindustriales</span></div>
<div class="c" style="left:494px;top:633px;width:95px"><span style="padding-left:1px;transform:scaleX(1.0)">Azúcar Blanco Importado</span></div>
<div class="c" style="left:590px;top:633px;width:69px"><span style="padding-left:1px;transform:scaleX(0.97)">Q.q</span></div>
<div class="r" style="left:660px;top:633px;width:126px"><span>260.7</span></div>
<div class="r" style="left:787px;top:633px;width:136px"><span>38.00</span></div>
<div class="a" style="left:203px;top:9px;font-size:20px;-webkit-text-stroke:0.15px #000;line-height:27px;color:#000;white-space:nowrap;letter-spacing:0.6px;transform-origin:0 0;transform:scaleX(0.763)">Precios de Productos Agropecuarios y</div>
<div class="a" style="left:238px;top:36px;font-size:20px;-webkit-text-stroke:0.15px #000;line-height:27px;color:#000;white-space:nowrap;letter-spacing:0.6px;transform-origin:0 0;transform:scaleX(0.78)">Agroindustriales por Ciudad</div>
<svg class="a" style="left:0;top:0" width="110" height="36" viewBox="0 0 110 36">
<path fill="#1f3b73" fill-rule="evenodd" d="M3.1 2.1H12A11.3 14.65 0 0 1 12 31.4H3.1Z M6.8 6.5V27.2H11A8.6 10.35 0 0 0 11 6.5Z"/>
<path fill="#1f3b73" d="M32.70 2.1H37.30 L46.10 31.3H41.50 L34.80 10.0 L28.00 31.3H23.60 Z"/>
<path fill="#1f3b73" d="M68.70 2.1H73.30 L82.10 31.3H77.50 L70.80 10.0 L64.00 31.3H59.60 Z"/>
<path fill="#1f3b73" d="M44.6 2.1H61.8V6.7H54.8V31.3H51.1V6.7H44.6Z"/>
<path fill="#1f3b73" d="M83.6 2.1H88.2L103 31.3H97.8Z M97.3 2.1H101.6L87.6 31.3H82.8Z"/>
<path fill="#2c9be6" transform="translate(0 0)" d="M33.4 19.9L35.4 19.7L37.1 23.9L36.3 24.8H35.0Z"/>
<path fill="#1f3b73" transform="translate(0 0)" d="M36.9 19.6H38.4L39.7 23.6H38.0Z"/>
<path fill="#2c9be6" transform="translate(36 0)" d="M33.4 19.9L35.4 19.7L37.1 23.9L36.3 24.8H35.0Z"/>
<path fill="#1f3b73" transform="translate(36 0)" d="M36.9 19.6H38.4L39.7 23.6H38.0Z"/>
</svg>
<div class="a" style="left:24px;top:38px;font-size:15.5px;line-height:20px;color:#4690dc;white-space:nowrap;letter-spacing:0.4px;transform-origin:0 0;transform:scaleX(0.79);text-shadow:1px 1px 1px rgba(0,0,0,0.12)">Tabla plana</div>
<div class="a" style="left:0;top:0;width:1214px;height:1px;background:#7f7f7f"></div>
<div class="a" style="left:1px;top:1px;width:1212px;height:1px;background:#f9f9f9"></div>
<div class="a" style="left:0;top:0;width:1px;height:81px;background:#7f7f7f"></div>
<div class="a" style="left:1px;top:1px;width:1px;height:79px;background:#f9f9f9"></div>
<div class="a" style="left:0;top:83px;width:1px;height:568px;background:#dcdcdc"></div>
<div class="a" style="left:1212px;top:83px;width:1px;height:567px;background:#fff"></div>
<div class="a" style="left:1213px;top:0;width:1px;height:651px;background:#858585"></div>
<div class="a" style="left:0;top:650px;width:1214px;height:1px;background:#8a8a8a"></div>
</body></html>
